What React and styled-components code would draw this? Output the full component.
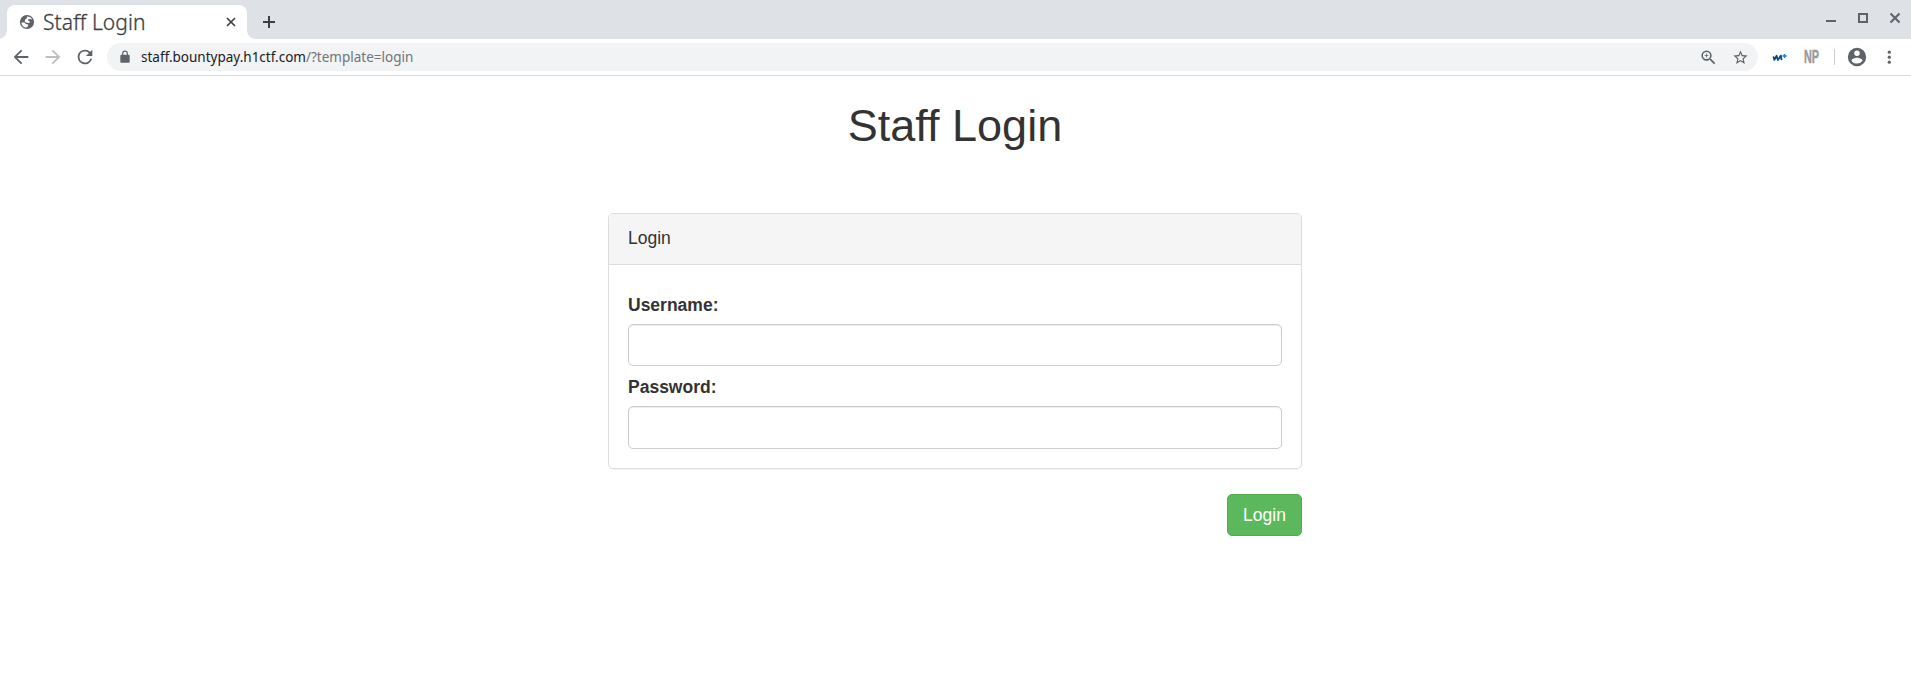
import React from "react";
import styled, { createGlobalStyle } from "styled-components";

const GlobalStyle = createGlobalStyle`
  * { box-sizing: border-box; }
  body { margin: 0; background: #fff; color: #333; font: 17.5px/25px "Liberation Sans", Arial, sans-serif; }
`;

const TabStrip = styled.header`
  height: 39px;
  padding: 5px 6px 0 7px;
  display: flex;
  background: #dee1e6;
`;
const Tab = styled.div`
  position: relative;
  width: 240px;
  height: 34px;
  padding: 0 9px 0 12px;
  display: flex;
  align-items: center;
  background: #fff;
  border-radius: 8px 8px 0 0;
  &::before, &::after {
    content: "";
    position: absolute;
    bottom: 0;
    width: 8px;
    height: 8px;
  }
  &::before { left: -8px; background: radial-gradient(circle at 0 0, transparent 7.5px, #fff 8px); }
  &::after { right: -8px; background: radial-gradient(circle at 100% 0, transparent 7.5px, #fff 8px); }
`;
const TabTitle = styled.span`
  flex: 1;
  margin-left: 8px;
  font: 300 21px/30px "Noto Sans", sans-serif;
  letter-spacing: 0.1px;
  -webkit-text-stroke: 0.3px #3c4043;
  color: #3c4043;
  white-space: nowrap;
`;
const Icon = styled.svg`
  display: block;
  flex: none;
  width: ${(p) => p.$size}px;
  height: ${(p) => p.$size}px;
  fill: ${(p) => p.$color || "#5f6368"};
`;
const NewTab = styled.div`
  margin: 7px 0 0 12px;
`;
const WindowControls = styled.div`
  display: flex;
  gap: 12px;
  height: 26px;
  align-items: center;
  margin-left: auto;
`;
const Toolbar = styled.nav`
  height: 37px;
  padding: 0 12px 0 10px;
  display: flex;
  align-items: center;
  border-bottom: 1px solid #dadce0;
`;
const NavButtons = styled.div`
  display: flex;
  flex: none;
  gap: 10px;
  width: 97px;
`;
const AddressBar = styled.div`
  flex: none;
  width: 1651px;
  height: 28px;
  padding: 0 9px 0 11px;
  display: flex;
  align-items: center;
  border-radius: 14px;
  background: #f1f3f4;
`;
const Url = styled.span`
  flex: 1;
  margin-left: 9px;
  font: 13.5px/20px "Noto Sans", sans-serif;
  color: #202124;
  white-space: nowrap;
`;
const UrlPath = styled.span`
  color: #70757a;
`;
const AddressActions = styled.div`
  display: flex;
  align-items: center;
  gap: 14px;
`;
const Extensions = styled.div`
  flex: 1;
  display: flex;
  align-items: center;
  margin-left: 14px;
`;
const NpBadge = styled.span`
  flex: none;
  width: 16px;
  margin-left: 16px;
  font: 700 17.5px/18px "Liberation Sans", sans-serif;
  color: #999;
  -webkit-text-stroke: 0.4px #999;
  span { display: inline-block; transform: scaleX(0.62); transform-origin: 0 50%; }
`;
const Divider = styled.div`
  flex: none;
  width: 1px;
  height: 16px;
  margin: 0 11px 0 14px;
  background: #c9ccd0;
`;
const Menu = styled.div`
  margin-left: 11px;
`;

const Page = styled.main`
  width: 694px;
  margin: 0 auto 0 608px;
  display: flex;
  flex-direction: column;
`;
const Title = styled.h1`
  margin: 25px 0 63px;
  font-size: 45px;
  line-height: 49px;
  font-weight: 500;
  text-align: center;
`;
const Panel = styled.section`
  height: 256px;
  border: 1px solid #ddd;
  border-radius: 5px;
  box-shadow: 0 1px 1px rgba(0, 0, 0, 0.05);
`;
const PanelHeading = styled.div`
  height: 51px;
  padding: 12px 19px;
  background: #f5f5f5;
  border-bottom: 1px solid #ddd;
  border-radius: 4px 4px 0 0;
`;
const PanelBody = styled.div`
  padding: 28px 19px 0;
`;
const Label = styled.label`
  display: block;
  margin-bottom: 6px;
  font-weight: 700;
`;
const Input = styled.input`
  display: block;
  width: 100%;
  height: ${(p) => p.$height}px;
  margin-bottom: 9px;
  padding: 7px 15px;
  font: inherit;
  border: 1px solid #ccc;
  border-radius: 5px;
  outline: none;
  box-shadow: inset 0 1px 1px rgba(0, 0, 0, 0.075);
`;
const SubmitButton = styled.button`
  align-self: flex-end;
  width: 75px;
  height: 42px;
  margin-top: 25px;
  padding: 0;
  font: inherit;
  color: #fff;
  background: #5cb85c;
  border: 1px solid #4cae4c;
  border-radius: 5px;
`;

export default function App() {
  return (
    <>
      <GlobalStyle />
      <TabStrip>
        <Tab>
          <Icon $size={16} viewBox="0 0 16 16">
            <circle cx="8" cy="8" r="7.1" />
            <path fill="#fff" d="M8 2.4C10.2 2.3 12.3 3.5 13.2 5.5L11.4 4.9 9.3 5.3 8.9 6.6 10.4 7 11 8.6 9.6 9 6.8 8.6 5.7 7.4 6.1 5.5 7.6 4.4z" />
            <path fill="#fff" d="M2.4 8.4L5.2 8.6 7 10 9.2 10.4 8.9 12.2 7.6 13.6C4.8 13.5 2.6 11.3 2.4 8.4z" />
          </Icon>
          <TabTitle>Staff Login</TabTitle>
          <Icon $size={14} viewBox="0 0 14 14">
            <path d="M3 3l8 8M11 3l-8 8" stroke="#3c4043" strokeWidth="1.7" />
          </Icon>
        </Tab>
        <NewTab>
          <Icon $size={20} viewBox="0 0 20 20">
            <path d="M10 4v12M4 10h12" stroke="#3c4043" strokeWidth="2" />
          </Icon>
        </NewTab>
        <WindowControls>
          <Icon $size={20} viewBox="0 0 20 20"><path d="M5 12h10v2H5z" /></Icon>
          <Icon $size={20} viewBox="0 0 20 20"><path fillRule="evenodd" d="M5 5h10v10H5zM7 7v6h6V7z" /></Icon>
          <Icon $size={20} viewBox="0 0 20 20"><path d="M5.5 5.5l9 9M14.5 5.5l-9 9" stroke="#5f6368" strokeWidth="2" /></Icon>
        </WindowControls>
      </TabStrip>
      <Toolbar>
        <NavButtons>
          <Icon $size={22} viewBox="0 0 24 24"><path d="M20 11H7.83l5.59-5.59L12 4l-8 8 8 8 1.41-1.41L7.83 13H20z" /></Icon>
          <Icon $size={22} $color="#bcbec1" viewBox="0 0 24 24"><path d="M12 4l-1.41 1.41L16.17 11H4v2h12.17l-5.58 5.59L12 20l8-8z" /></Icon>
          <Icon $size={22} viewBox="0 0 24 24"><path d="M17.65 6.35A7.96 7.96 0 0 0 12 4a8 8 0 1 0 7.73 10h-2.08A6 6 0 1 1 12 6c1.66 0 3.14.69 4.22 1.78L13 11h7V4z" /></Icon>
        </NavButtons>
        <AddressBar>
          <Icon $size={14} viewBox="0 0 24 24"><path d="M18 8h-1V6A5 5 0 0 0 7 6v2H6a2 2 0 0 0-2 2v10c0 1.1.9 2 2 2h12a2 2 0 0 0 2-2V10a2 2 0 0 0-2-2zM8.9 8V6a3.1 3.1 0 0 1 6.2 0v2z" /></Icon>
          <Url>staff.bountypay.h1ctf.com<UrlPath>/?template=login</UrlPath></Url>
          <AddressActions>
            <Icon $size={19} viewBox="0 0 24 24"><path d="M15.5 14h-.79l-.28-.27A6.47 6.47 0 0 0 16 9.5 6.5 6.5 0 1 0 9.5 16c1.61 0 3.09-.59 4.23-1.57l.27.28v.79l5 4.99L20.49 19zM9.5 14a4.5 4.5 0 1 1 0-9 4.5 4.5 0 0 1 0 9zM12 10h-2v2H9v-2H7V9h2V7h1v2h2z" /></Icon>
            <Icon $size={17} viewBox="0 0 24 24"><path d="M22 9.24l-7.19-.62L12 2 9.19 8.63 2 9.24l5.46 4.73L5.82 21 12 17.27 18.18 21l-1.63-7.03zM12 15.4l-3.76 2.27 1-4.28-3.32-2.88 4.38-.38L12 6.1l1.71 4.04 4.38.38-3.32 2.88 1 4.28z" /></Icon>
          </AddressActions>
        </AddressBar>
        <Extensions>
          <Icon $size={16} viewBox="0 0 16 16">
            <path d="M1.6 8.2L2.4 10.9 4.6 6.8 5.9 10.9 8.9 6.6 9.4 10.4" fill="none" stroke="#0b4a85" strokeWidth="1.8" strokeLinejoin="round" strokeLinecap="round" />
            <path d="M12.5 4.9v4.2M10.4 7h4.2" stroke="#1187c9" strokeWidth="1.4" />
          </Icon>
          <NpBadge><span>NP</span></NpBadge>
          <Divider />
          <Icon $size={22} viewBox="0 0 24 24"><path d="M12 2a10 10 0 1 0 0 20 10 10 0 0 0 0-20zm0 3a3 3 0 1 1 0 6 3 3 0 0 1 0-6zm0 14.2A7.2 7.2 0 0 1 6 15.98c.03-1.99 4-3.08 6-3.08s5.97 1.09 6 3.08a7.2 7.2 0 0 1-6 3.22z" /></Icon>
          <Menu>
            <Icon $size={20} viewBox="0 0 20 20"><circle cx="10.3" cy="5.2" r="1.6" /><circle cx="10.3" cy="10.2" r="1.6" /><circle cx="10.3" cy="15.2" r="1.6" /></Icon>
          </Menu>
        </Extensions>
      </Toolbar>
      <Page>
        <Title>Staff Login</Title>
        <Panel>
          <PanelHeading>Login</PanelHeading>
          <PanelBody>
            <Label htmlFor="username">Username:</Label>
            <Input id="username" $height={42} />
            <Label htmlFor="password">Password:</Label>
            <Input id="password" type="password" $height={43} />
          </PanelBody>
        </Panel>
        <SubmitButton type="button">Login</SubmitButton>
      </Page>
    </>
  );
}
